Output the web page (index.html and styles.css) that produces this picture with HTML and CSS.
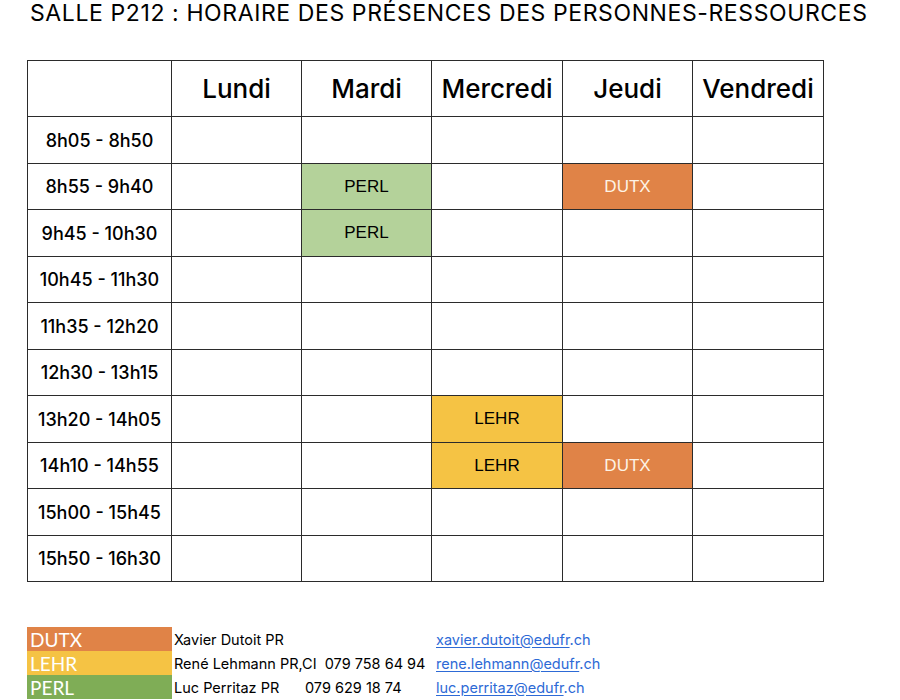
FILE: index.html
```html
<!DOCTYPE html>
<html lang="fr">
<head>
<meta charset="utf-8">
<title>Salle P212</title>
<link rel="stylesheet" href="styles.css">
</head>
<body>
<h1 class="title">SALLE P212 : HORAIRE DES PRÉSENCES DES PERSONNES-RESSOURCES</h1>
<div class="schedule">
  <div class="cell head"></div>
  <div class="cell head">Lundi</div>
  <div class="cell head">Mardi</div>
  <div class="cell head">Mercredi</div>
  <div class="cell head">Jeudi</div>
  <div class="cell head">Vendredi</div>

  <div class="cell time">8h05 - 8h50</div>
  <div class="cell"></div><div class="cell"></div><div class="cell"></div><div class="cell"></div><div class="cell"></div>

  <div class="cell time">8h55 - 9h40</div>
  <div class="cell"></div><div class="cell slot perl">PERL</div><div class="cell"></div><div class="cell slot dutx">DUTX</div><div class="cell"></div>

  <div class="cell time">9h45 - 10h30</div>
  <div class="cell"></div><div class="cell slot perl">PERL</div><div class="cell"></div><div class="cell"></div><div class="cell"></div>

  <div class="cell time">10h45 - 11h30</div>
  <div class="cell"></div><div class="cell"></div><div class="cell"></div><div class="cell"></div><div class="cell"></div>

  <div class="cell time">11h35 - 12h20</div>
  <div class="cell"></div><div class="cell"></div><div class="cell"></div><div class="cell"></div><div class="cell"></div>

  <div class="cell time">12h30 - 13h15</div>
  <div class="cell"></div><div class="cell"></div><div class="cell"></div><div class="cell"></div><div class="cell"></div>

  <div class="cell time">13h20 - 14h05</div>
  <div class="cell"></div><div class="cell"></div><div class="cell slot lehr">LEHR</div><div class="cell"></div><div class="cell"></div>

  <div class="cell time">14h10 - 14h55</div>
  <div class="cell"></div><div class="cell"></div><div class="cell slot lehr">LEHR</div><div class="cell slot dutx">DUTX</div><div class="cell"></div>

  <div class="cell time">15h00 - 15h45</div>
  <div class="cell"></div><div class="cell"></div><div class="cell"></div><div class="cell"></div><div class="cell"></div>

  <div class="cell time">15h50 - 16h30</div>
  <div class="cell"></div><div class="cell"></div><div class="cell"></div><div class="cell"></div><div class="cell"></div>
</div>

<div class="legend">
  <div class="tag dutx-l">DUTX</div>
  <div class="info name">Xavier Dutoit PR</div>
  <div class="info phone"></div>
  <div class="info mail"><a class="link" href="#"><span class="ul">xavier.dutoit@edufr</span>.ch</a></div>

  <div class="tag lehr-l">LEHR</div>
  <div class="info name wide">René Lehmann PR,CI&nbsp; 079 758 64 94</div>
  <div class="info mail"><a class="link" href="#"><span class="ul">rene.lehmann@edufr</span>.ch</a></div>

  <div class="tag perl-l">PERL</div>
  <div class="info name">Luc Perritaz PR</div>
  <div class="info phone">079 629 18 74</div>
  <div class="info mail"><a class="link" href="#"><span class="ul">luc.perritaz@edufr</span>.ch</a></div>
</div>
</body>
</html>
```

FILE: styles.css
```css
html, body {
  margin: 0;
  padding: 0;
  background: #ffffff;
}

body {
  width: 900px;
  height: 700px;
  overflow: hidden;
  font-family: "Inter", "Open Sans", sans-serif;
  color: #000;
}

.title {
  margin: 0;
  padding: 0 0 0 30px;
  height: 60px;
  box-sizing: border-box;
  font-size: 23px;
  line-height: 26px;
  font-weight: 400;
  letter-spacing: 0.6px;
  white-space: nowrap;
  color: #000;
}

.schedule {
  display: grid;
  grid-template-columns: 143px 129px 129px 130px 129px 130px;
  grid-template-rows: 55px 46px 45px 46px 45px 46px 45px 46px 45px 46px 45px;
  gap: 1px;
  width: max-content;
  margin-left: 27px;
  border: 1px solid #2b2b2b;
  background: #2b2b2b;
}

.cell {
  background: #ffffff;
  display: flex;
  align-items: center;
  justify-content: center;
  white-space: nowrap;
}

.head {
  font-size: 26px;
  font-weight: 500;
}

.time {
  font-size: 18px;
  font-weight: 500;
}

.slot {
  font-family: "Liberation Sans", Arial, sans-serif;
  font-size: 17px;
}

.perl { background: #b4d29a; }
.lehr { background: #f5c344; }
.dutx { background: #e08347; color: #fdf3e6; }

.legend {
  display: grid;
  grid-template-columns: 145px 131px 131px auto;
  grid-template-rows: 24px 24px 24px;
  margin: 45px 0 0 27px;
}

.tag {
  display: flex;
  align-items: center;
  padding-left: 3px;
  font-family: "Lato", sans-serif;
  font-size: 19px;
  color: #ffffff;
}

.dutx-l { background: #e08347; }
.lehr-l { background: #f5c344; }
.perl-l { background: #7fad56; }

.info {
  display: flex;
  align-items: center;
  padding-left: 2px;
  font-size: 14.5px;
  white-space: nowrap;
}

.wide { grid-column: span 2; }

.link {
  color: #2d6ad6;
  text-decoration: none;
}

.ul {
  text-decoration: underline;
  text-underline-offset: 2px;
}
```
